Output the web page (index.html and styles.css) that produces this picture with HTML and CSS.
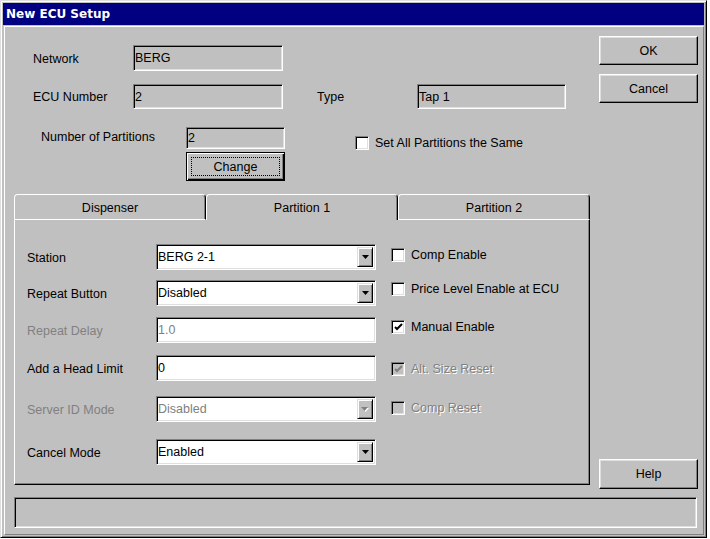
FILE: index.html
```html
<!DOCTYPE html>
<html>
<head>
<meta charset="utf-8">
<title>New ECU Setup</title>
<link rel="stylesheet" href="styles.css">
</head>
<body>
<div class="window">
  <div class="titlebar">New ECU Setup</div>
  <div class="client">
    <div class="upper">
      <div class="left">
        <div class="frow r1">
          <span class="flabel">Network</span>
          <div class="field ro w150 h26">BERG</div>
        </div>
        <div class="frow r2">
          <span class="flabel">ECU Number</span>
          <div class="field ro w150 h25">2</div>
          <span class="flabel type">Type</span>
          <div class="field ro w149 h25">Tap 1</div>
        </div>
        <div class="frow r3">
          <span class="flabel parts">Number of Partitions</span>
          <div class="stack">
            <div class="field ro w99 h22">2</div>
            <div class="btn default"><span class="focus">Change</span></div>
          </div>
          <label class="check setall"><span class="cb"></span><span>Set All Partitions the Same</span></label>
        </div>

        <div class="tabs">
          <div class="tab">Dispenser</div>
          <div class="tab active">Partition 1</div>
          <div class="tab">Partition 2</div>
        </div>
        <div class="panel">
          <div class="pform">
            <div class="prow">
              <span class="plabel">Station</span>
              <div class="select"><span class="val">BERG 2-1</span><span class="ddbtn"><svg width="7" height="4" viewBox="0 0 7 4"><path d="M0 0h7L3.5 4z" fill="#000"/></svg></span></div>
            </div>
            <div class="prow g10">
              <span class="plabel">Repeat Button</span>
              <div class="select"><span class="val">Disabled</span><span class="ddbtn"><svg width="7" height="4" viewBox="0 0 7 4"><path d="M0 0h7L3.5 4z" fill="#000"/></svg></span></div>
            </div>
            <div class="prow g11 disabled">
              <span class="plabel">Repeat Delay</span>
              <div class="select"><span class="val">1.0</span></div>
            </div>
            <div class="prow g12">
              <span class="plabel">Add a Head Limit</span>
              <div class="select"><span class="val">0</span></div>
            </div>
            <div class="prow g15 disabled">
              <span class="plabel">Server ID Mode</span>
              <div class="select"><span class="val">Disabled</span><span class="ddbtn"><svg width="8" height="5" viewBox="0 0 8 5"><path d="M1 1h7L4.5 5z" fill="#fff"/><path d="M0 0h7L3.5 4z" fill="#808080"/></svg></span></div>
            </div>
            <div class="prow g17">
              <span class="plabel">Cancel Mode</span>
              <div class="select"><span class="val">Enabled</span><span class="ddbtn"><svg width="7" height="4" viewBox="0 0 7 4"><path d="M0 0h7L3.5 4z" fill="#000"/></svg></span></div>
            </div>
          </div>
          <div class="pchecks">
            <label class="check c1"><span class="cb"></span><span>Comp Enable</span></label>
            <label class="check c2"><span class="cb"></span><span>Price Level Enable at ECU</span></label>
            <label class="check c3"><span class="cb"><svg width="9" height="9" viewBox="0 0 9 9"><path d="M1 4l2 2 5-5" fill="none" stroke="#000" stroke-width="2"/></svg></span><span>Manual Enable</span></label>
            <label class="check c4 off"><span class="cb"><svg width="9" height="9" viewBox="0 0 9 9"><path d="M1 4l2 2 5-5" fill="none" stroke="#808080" stroke-width="2"/></svg></span><span>Alt. Size Reset</span></label>
            <label class="check c5 off"><span class="cb"></span><span>Comp Reset</span></label>
          </div>
        </div>
      </div>
      <div class="side">
        <div class="btn ok">OK</div>
        <div class="btn cancel">Cancel</div>
        <div class="btn help">Help</div>
      </div>
    </div>
    <div class="status"></div>
  </div>
</div>
</body>
</html>
```
FILE: styles.css
```css
html, body { margin: 0; padding: 0; background: #fff; }
body { font-family: "Liberation Sans", Arial, sans-serif; font-size: 12.5px; color: #000; }

.window {
  width: 707px; height: 538px; box-sizing: border-box;
  background: #c0c0c0;
  border: 1px solid; border-color: #dfdfdf #000 #000 #dfdfdf;
  box-shadow: inset 1px 1px #fff, inset -1px -1px #808080;
  padding: 2px;
  display: flex; flex-direction: column;
}
.titlebar {
  height: 22px; background: #000080; color: #fff;
  font-family: "DejaVu Sans", sans-serif; font-weight: bold; font-size: 12px;
  line-height: 22px; padding-left: 3px;
}
.client {
  flex: 1; margin: 1px 0 0 1px;
  border-top: 1px solid #fff; border-left: 1px solid #fff;
  border-right: 1px solid #808080; border-bottom: 1px solid #808080;
  padding-left: 9px;
}
.upper { display: flex; }
.left { width: 576px; padding-bottom: 4px; }
.side { width: 99px; margin-left: 9px; display: flex; flex-direction: column; }

.frow { display: flex; align-items: center; }
.r1 { margin-top: 18px; }
.r2 { margin-top: 13px; }
.r3 { margin-top: 18px; align-items: flex-start; }
.flabel { width: 100px; padding-left: 19px; flex: none; padding-top: 1px; }
.flabel.type { padding-left: 34px; }
.flabel.parts { width: 145px; padding-left: 27px; line-height: 18px; }
.stack { display: flex; flex-direction: column; width: 99px; }

.field {
  box-sizing: border-box; border: 1px solid;
  border-color: #808080 #fff #fff #808080;
  box-shadow: inset 1px 1px #000, inset -1px -1px #dfdfdf;
  background: #fff; display: flex; align-items: center; padding-left: 1px;
}
.field.ro { background: #c0c0c0; }
.w150 { width: 150px; } .w149 { width: 149px; } .w99 { width: 99px; }
.h26 { height: 26px; } .h25 { height: 25px; } .h22 { height: 22px; }

.btn {
  box-sizing: border-box; height: 29px;
  border: 1px solid; border-color: #fff #000 #000 #fff;
  box-shadow: inset -1px -1px #808080, inset 1px 1px #dfdfdf;
  display: flex; align-items: center; justify-content: center;
  background: #c0c0c0;
}
.btn.default { margin-top: 3px; border: 1px solid #000; box-shadow: inset 1px 1px #fff, inset -1px -1px #000, inset -2px -2px #808080; padding: 4px; }
.btn .focus { flex: 1; align-self: stretch; display: flex; align-items: center; justify-content: center; border: 1px dotted #000; }
.ok { margin-top: 9px; }
.cancel { margin-top: 9px; }
.help { margin-top: auto; height: 30px; }

.check { display: flex; align-items: center; gap: 6px; white-space: nowrap; }
.cb {
  width: 14px; height: 14px; box-sizing: border-box; flex: none;
  border: 1px solid; border-color: #808080 #fff #fff #808080;
  box-shadow: inset 1px 1px #000, inset -1px -1px #dfdfdf;
  background: #fff; display: flex; align-items: center; justify-content: center;
}
.cb svg { display: block; margin: 1px 0 0 0; }
.check.off { color: #808080; text-shadow: 1px 1px 0 #fff; }
.check.off .cb { background: #c0c0c0; }
.setall { margin-left: 70px; margin-top: 9px; }

.tabs { display: flex; height: 26px; margin-top: 13px; }
.tab {
  flex: 1; box-sizing: border-box; height: 26px; padding-top: 2px;
  border-top: 1px solid #fff; border-left: 1px solid #fff; border-right: 1px solid #000;
  border-bottom: 1px solid #fff;
  box-shadow: inset -1px 0 #808080;
  border-radius: 4px 4px 0 0;
  display: flex; align-items: center; justify-content: center;
}
.tab.active { border-bottom: none; padding-top: 1px; }

.panel {
  height: 265px; box-sizing: border-box;
  border-left: 1px solid #fff; border-right: 1px solid #000; border-bottom: 1px solid #000;
  box-shadow: inset -1px -1px #808080;
  display: flex;
}
.pform { padding: 24px 0 0 12px; }
.prow { display: flex; align-items: center; }
.g10 { margin-top: 10px; } .g11 { margin-top: 11px; } .g12 { margin-top: 12px; }
.g15 { margin-top: 15px; } .g17 { margin-top: 17px; }
.plabel { width: 129px; flex: none; padding-top: 1px; }
.prow.disabled .plabel, .prow.disabled .val { color: #808080; }
.select {
  width: 220px; height: 26px; box-sizing: border-box;
  border: 1px solid; border-color: #808080 #fff #fff #808080;
  box-shadow: inset 1px 1px #000, inset -1px -1px #dfdfdf;
  background: #fff; display: flex; align-items: stretch; padding: 2px 2px 2px 1px;
}
.select .val { flex: 1; display: flex; align-items: center; padding-left: 0; }
.ddbtn {
  width: 16px; box-sizing: border-box; flex: none;
  border: 1px solid; border-color: #dfdfdf #000 #000 #dfdfdf;
  box-shadow: inset 1px 1px #fff, inset -1px -1px #808080;
  background: #c0c0c0; display: flex; align-items: center; justify-content: center;
}
.ddbtn svg { display: block; }

.pchecks { margin-left: 15px; padding-top: 28px; display: flex; flex-direction: column; }
.c2 { margin-top: 20px; } .c3 { margin-top: 24px; } .c4 { margin-top: 28px; } .c5 { margin-top: 25px; }

.status {
  width: 683px; height: 31px; box-sizing: border-box; margin-top: 8px;
  border: 1px solid; border-color: #808080 #fff #fff #808080;
  box-shadow: inset 1px 1px #000, inset -1px -1px #dfdfdf;
}
```
